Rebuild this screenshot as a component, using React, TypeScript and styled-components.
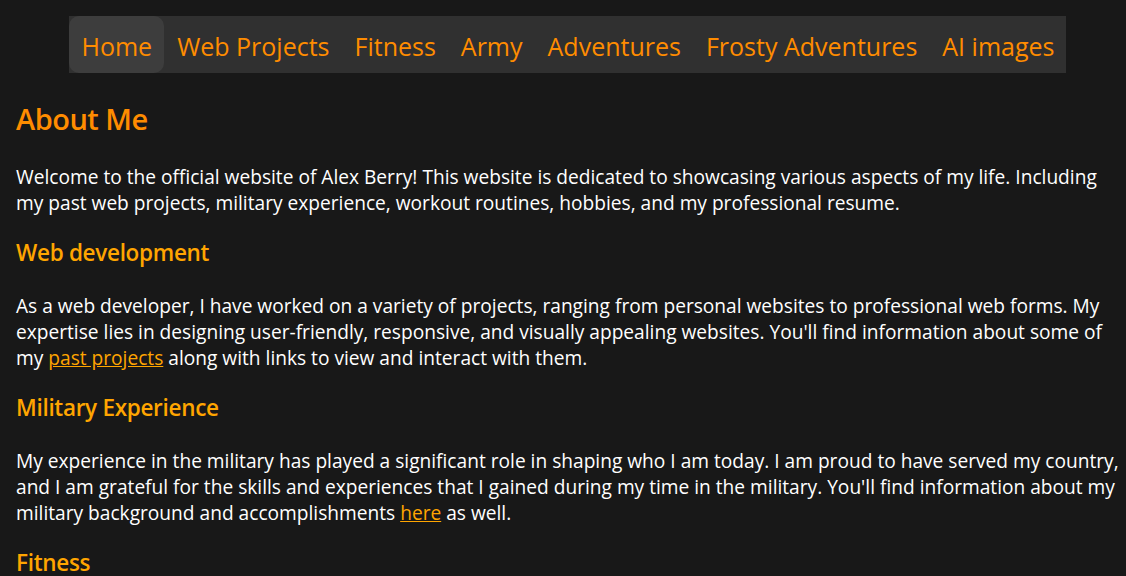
import React from "react";
import styled, { createGlobalStyle } from "styled-components";

const Global = createGlobalStyle`
  html, body { background: #181818; }
  body {
    margin: 8px;
    font-family: "Open Sans", "Noto Sans", sans-serif;
    color: #ffffff;
  }
`;

const Nav = styled.nav`
  display: flex;
  justify-content: center;
  padding-left: 9px;
`;

const NavList = styled.ul`
  display: flex;
  list-style: none;
  margin: 8px 0 0;
  padding: 0;
  background: #303030;
`;

const NavItem = styled.li<{ $active?: boolean }>`
  display: flex;
  align-items: center;
  height: 57px;
  padding: 0 12px 0 13px;
  border-radius: ${(p) => (p.$active ? "10px" : "0")};
  background: ${(p) => (p.$active ? "#3d3d3d" : "transparent")};
`;

const NavLink = styled.a`
  color: #ff8c00;
  font-size: 25px;
  text-decoration: none;
  padding-top: 2px;
`;

const Main = styled.main`
  padding-left: 8px;
  margin-right: -8px;
`;

const Title = styled.h1`
  color: #ff8c00;
  font-size: 29px;
  font-weight: 600;
  margin: 26px 0 0;
  line-height: 40px;
  letter-spacing: -0.5px;
`;

const Sub = styled.h3`
  color: #ffa500;
  font-size: 22.5px;
  font-weight: 600;
  margin: 0;
  line-height: 30px;
  letter-spacing: -0.3px;
`;

const Para = styled.p`
  font-size: 19.15px;
  line-height: 26px;
  margin: 25px 0 22px;

  ${Sub} + & {
    margin-top: 25px;
  }
`;

const Link = styled.a`
  color: #ffa500;
`;

const items = [
  "Home",
  "Web Projects",
  "Fitness",
  "Army",
  "Adventures",
  "Frosty Adventures",
  "AI images",
];

export default function App() {
  return (
    <>
      <Global />
      <Nav>
        <NavList>
          {items.map((it, i) => (
            <NavItem key={it} $active={i === 0}>
              <NavLink href="#">{it}</NavLink>
            </NavItem>
          ))}
        </NavList>
      </Nav>
      <Main>
        <Title>About Me</Title>
        <Para>
          Welcome to the official website of Alex Berry! This website is dedicated to
          showcasing various aspects of my life. Including my past web projects, military
          experience, workout routines, hobbies, and my professional resume.
        </Para>
        <Sub>Web development</Sub>
        <Para>
          As a web developer, I have worked on a variety of projects, ranging from personal
          websites to professional web forms. My expertise lies in designing user-friendly,
          responsive, and visually appealing websites. You'll find information about some of
          my <Link href="#">past projects</Link> along with links to view and interact with
          them.
        </Para>
        <Sub>Military Experience</Sub>
        <Para>
          My experience in the military has played a significant role in shaping who I am
          today. I am proud to have served my country, and I am grateful for the skills and
          experiences that I gained during my time in the military. You'll find information
          about my military background and accomplishments <Link href="#">here</Link> as
          well.
        </Para>
        <Sub>Fitness</Sub>
      </Main>
    </>
  );
}
